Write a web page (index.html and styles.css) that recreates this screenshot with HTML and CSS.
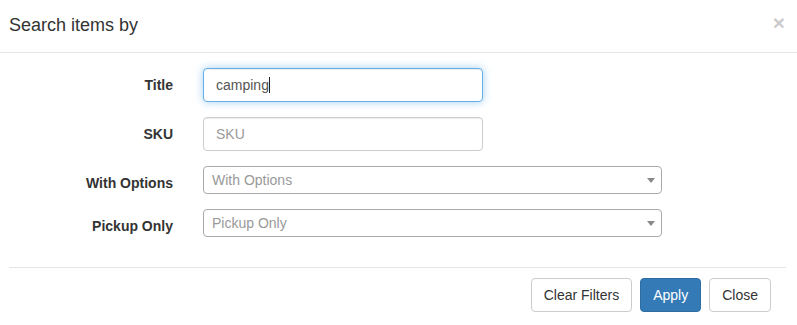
FILE: index.html
```html
<!DOCTYPE html>
<html lang="en">
  <head>
    <meta charset="UTF-8" />
    <meta name="viewport" content="width=device-width, initial-scale=1.0" />
    <title>Search items by</title>
    <link rel="stylesheet" href="styles.css">
  </head>
  <body>
    <div class="modal">
      <div class="modal-header">
        <h4 class="modal-title">Search items by</h4>
        <button class="close" type="button">&times;</button>
      </div>

      <div class="modal-body">
        <div class="form-group">
          <label class="control-label" for="title">Title</label>
          <div class="field">
            <input type="text" class="form-control is-focus" id="title" value="camping" />
            <span class="caret-line"></span>
          </div>
        </div>
        <div class="form-group">
          <label class="control-label" for="sku">SKU</label>
          <div class="field">
            <input type="text" class="form-control" id="sku" placeholder="SKU" />
          </div>
        </div>
        <div class="form-group">
          <label class="control-label">With Options</label>
          <div class="select">
            <span class="select-placeholder">With Options</span>
            <span class="select-arrow"></span>
          </div>
        </div>
        <div class="form-group">
          <label class="control-label">Pickup Only</label>
          <div class="select">
            <span class="select-placeholder">Pickup Only</span>
            <span class="select-arrow"></span>
          </div>
        </div>
      </div>

      <div class="modal-footer">
        <button class="btn">Clear Filters</button>
        <button class="btn btn-primary">Apply</button>
        <button class="btn">Close</button>
      </div>
    </div>
  </body>
</html>
```

FILE: styles.css
```css
* {
  box-sizing: border-box;
}

body {
  margin: 0;
  font-family: "Liberation Sans", Arial, sans-serif;
  font-size: 14px;
  color: #333;
  background-color: #fff;
}

.modal {
  width: 797px;
  height: 325px;
  overflow: hidden;
}

.modal-header {
  display: flex;
  align-items: flex-start;
  justify-content: space-between;
  padding: 15px 12px 17px 9px;
  border-bottom: 1px solid #e5e5e5;
}

.modal-title {
  margin: 0;
  font-size: 18px;
  font-weight: normal;
  line-height: 20px;
}

.close {
  border: none;
  background: none;
  padding: 0;
  margin-top: -3px;
  font-family: "Liberation Sans", Arial, sans-serif;
  font-size: 21px;
  font-weight: bold;
  line-height: 21px;
  color: #000;
  opacity: 0.2;
  cursor: pointer;
}

.modal-body {
  padding: 15px 0;
}

.form-group {
  display: grid;
  grid-template-columns: 173px 1fr;
  column-gap: 30px;
  margin-bottom: 15px;
}

.control-label {
  text-align: right;
  font-weight: bold;
  line-height: 20px;
  padding-top: 7px;
}

.field {
  position: relative;
  width: 280px;
}

.form-control {
  display: block;
  width: 100%;
  height: 34px;
  padding: 6px 12px;
  font-family: inherit;
  font-size: 14px;
  line-height: 20px;
  color: #555;
  background-color: #fff;
  border: 1px solid #ccc;
  border-radius: 4px;
  box-shadow: inset 0 1px 1px rgba(0, 0, 0, 0.075);
  outline: none;
}

.form-control::placeholder {
  color: #999;
}

.form-control.is-focus {
  border-color: #66afe9;
  box-shadow: inset 0 1px 1px rgba(0, 0, 0, 0.075), 0 0 8px rgba(102, 175, 233, 0.6);
}

.caret-line {
  position: absolute;
  left: 66px;
  top: 9px;
  width: 1px;
  height: 16px;
  background-color: #222;
}

.select {
  position: relative;
  width: 459px;
  height: 28px;
  border: 1px solid #aaa;
  border-radius: 4px;
  background-color: #fff;
}

.select-placeholder {
  display: block;
  padding-left: 8px;
  line-height: 26px;
  color: #999;
}

.select-arrow {
  position: absolute;
  right: 6px;
  top: 11px;
  width: 0;
  height: 0;
  border-style: solid;
  border-width: 5px 4px 0 4px;
  border-color: #888 transparent transparent transparent;
}

.modal-footer {
  display: flex;
  justify-content: flex-end;
  gap: 8px;
  margin: 0 11px 0 9px;
  padding: 10px 15px 13px;
  border-top: 1px solid #e5e5e5;
}

.btn {
  padding: 6px 12px;
  font-family: inherit;
  font-size: 14px;
  line-height: 20px;
  color: #333;
  background-color: #fff;
  border: 1px solid #ccc;
  border-radius: 4px;
  cursor: pointer;
}

.btn-primary {
  color: #fff;
  background-color: #337ab7;
  border-color: #2e6da4;
}
```
